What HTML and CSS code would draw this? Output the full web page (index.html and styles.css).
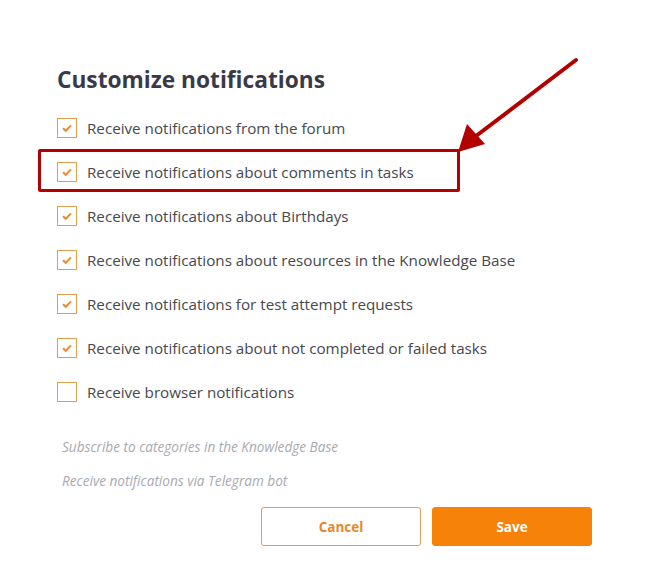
FILE: index.html
```html
<!DOCTYPE html>
<html lang="en">
<head>
<meta charset="utf-8">
<title>Customize notifications</title>
<link rel="stylesheet" href="styles.css">
</head>
<body>
<div class="panel">
  <h1 class="title">Customize notifications</h1>
  <ul class="options">
    <li class="option"><span class="box checked"><svg viewBox="0 0 20 20" width="20" height="20"><path d="M6 10.2 L8.8 12.8 L14 7.4" fill="none" stroke="#ee8a2c" stroke-width="2"/></svg></span><span class="label">Receive notifications from the forum</span></li>
    <li class="option"><span class="box checked"><svg viewBox="0 0 20 20" width="20" height="20"><path d="M6 10.2 L8.8 12.8 L14 7.4" fill="none" stroke="#ee8a2c" stroke-width="2"/></svg></span><span class="label">Receive notifications about comments in tasks</span></li>
    <li class="option"><span class="box checked"><svg viewBox="0 0 20 20" width="20" height="20"><path d="M6 10.2 L8.8 12.8 L14 7.4" fill="none" stroke="#ee8a2c" stroke-width="2"/></svg></span><span class="label">Receive notifications about Birthdays</span></li>
    <li class="option"><span class="box checked"><svg viewBox="0 0 20 20" width="20" height="20"><path d="M6 10.2 L8.8 12.8 L14 7.4" fill="none" stroke="#ee8a2c" stroke-width="2"/></svg></span><span class="label">Receive notifications about resources in the Knowledge Base</span></li>
    <li class="option"><span class="box checked"><svg viewBox="0 0 20 20" width="20" height="20"><path d="M6 10.2 L8.8 12.8 L14 7.4" fill="none" stroke="#ee8a2c" stroke-width="2"/></svg></span><span class="label">Receive notifications for test attempt requests</span></li>
    <li class="option"><span class="box checked"><svg viewBox="0 0 20 20" width="20" height="20"><path d="M6 10.2 L8.8 12.8 L14 7.4" fill="none" stroke="#ee8a2c" stroke-width="2"/></svg></span><span class="label">Receive notifications about not completed or failed tasks</span></li>
    <li class="option"><span class="box"></span><span class="label">Receive browser notifications</span></li>
  </ul>
  <div class="links">
    <a class="link">Subscribe to categories in the Knowledge Base</a>
    <a class="link">Receive notifications via Telegram bot</a>
  </div>
  <div class="actions">
    <button class="btn btn-cancel">Cancel</button>
    <button class="btn btn-save">Save</button>
  </div>
</div>
<div class="highlight"></div>
<svg class="arrow" width="658" height="570" viewBox="0 0 658 570">
  <line x1="576" y1="60" x2="476" y2="136" stroke="#b30000" stroke-width="4" stroke-linecap="round"/>
  <polygon points="458,152 467,124 485,144" fill="#b30000"/>
</svg>
</body>
</html>
```
FILE: styles.css
```css
html, body {
  margin: 0;
  padding: 0;
  background: #ffffff;
}
body {
  font-family: "Open Sans", "Noto Sans", sans-serif;
  color: #4a4a52;
  width: 658px;
  height: 570px;
  position: relative;
  overflow: hidden;
}
.panel {
  padding: 64px 0 0 57px;
  width: 535px;
}
.title {
  margin: 0;
  font-size: 22.7px;
  line-height: 32px;
  font-weight: 700;
  color: #393a48;
}
.options {
  list-style: none;
  margin: 10px 0 0 0;
  padding: 0;
}
.option {
  height: 44px;
  display: flex;
  align-items: center;
  gap: 10px;
}
.box {
  width: 20px;
  height: 20px;
  box-sizing: border-box;
  border: 1px solid #e59c4c;
  display: flex;
  align-items: center;
  justify-content: center;
  flex: none;
}
.box svg {
  display: block;
  margin: -1px;
}
.label {
  font-size: 15.2px;
  color: #47474f;
}
.links {
  margin: 23px 0 0 5px;
  display: flex;
  flex-direction: column;
  gap: 14px;
}
.link {
  font-size: 13.6px;
  line-height: 20px;
  font-style: italic;
  color: #a9a9b1;
}
.actions {
  margin-top: 16px;
  display: flex;
  justify-content: flex-end;
  gap: 11px;
}
.btn {
  width: 160px;
  height: 39px;
  border-radius: 3px;
  font-family: "Open Sans", "Noto Sans", sans-serif;
  font-size: 13.5px;
  font-weight: 700;
  cursor: pointer;
}
.btn-cancel {
  background: #ffffff;
  border: 1px solid #e89a4e;
  color: #e8862c;
}
.btn-save {
  background: #f7820a;
  border: 1px solid #f7820a;
  color: #ffffff;
}
.highlight {
  position: absolute;
  left: 38px;
  top: 149px;
  width: 422px;
  height: 43px;
  box-sizing: border-box;
  border: 3.5px solid #b30000;
  border-radius: 2px;
}
.arrow {
  position: absolute;
  left: 0;
  top: 0;
  pointer-events: none;
}
```
